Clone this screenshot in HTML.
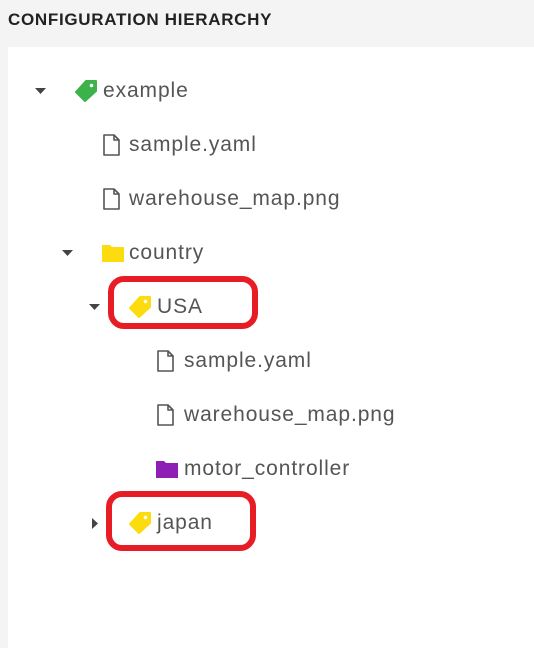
<!DOCTYPE html>
<html><head><meta charset="utf-8"><style>
*{margin:0;padding:0;box-sizing:border-box}
body{width:534px;height:648px;background:#f4f4f4;font-family:"Liberation Sans",sans-serif;position:relative;overflow:hidden}
.hdr{position:absolute;left:8px;top:10px;font-weight:bold;font-size:17px;color:#222;letter-spacing:0.7px}
.panel{position:absolute;left:8px;top:47px;right:0;bottom:0;background:#fff}
.row{position:absolute;height:30px;display:flex;align-items:center;font-size:21px;letter-spacing:0.9px;color:#555}
.arrow{position:absolute}
.box{position:absolute;border:6px solid #e81c24;border-radius:16px}
</style></head><body>
<div class="hdr">CONFIGURATION HIERARCHY</div>
<div class="panel"></div>

<svg class="arrow" style="left:35px;top:88px" width="11" height="7"><path d="M0 0H11L5.5 6Z" fill="#444"/></svg>
<svg class="arrow" style="left:62px;top:250px" width="11" height="7"><path d="M0 0H11L5.5 6Z" fill="#444"/></svg>
<svg class="arrow" style="left:89px;top:304px" width="11" height="7"><path d="M0 0H11L5.5 6Z" fill="#444"/></svg>
<svg class="arrow" style="left:92px;top:518px" width="7" height="11"><path d="M0 0V11L6 5.5Z" fill="#444"/></svg>

<svg style="position:absolute;left:74px;top:80px" width="24" height="22" viewBox="0 0 24 22"><path d="M12 1H22V11L11 21L2 12Z" fill="#3cb34a" stroke="#3cb34a" stroke-linejoin="round" stroke-width="2"/><circle cx="17.5" cy="5.5" r="1.8" fill="#fff"/></svg>
<div class="row" style="left:103px;top:76px">example</div>

<svg style="position:absolute;left:103px;top:134px" width="17" height="22" viewBox="0 0 17 22"><path d="M1 1H11L16 6V21H1Z M11 1V6H16" fill="none" stroke="#555" stroke-width="1.6" stroke-linejoin="round"/></svg>
<div class="row" style="left:129px;top:130px">sample.yaml</div>

<svg style="position:absolute;left:103px;top:188px" width="17" height="22" viewBox="0 0 17 22"><path d="M1 1H11L16 6V21H1Z M11 1V6H16" fill="none" stroke="#555" stroke-width="1.6" stroke-linejoin="round"/></svg>
<div class="row" style="left:129px;top:184px">warehouse_map.png</div>

<svg style="position:absolute;left:102px;top:244px" width="22" height="18" viewBox="0 0 22 18"><path d="M0 1H8L10 3H22V18H0Z" fill="#fddc0f"/></svg>
<div class="row" style="left:129px;top:238px">country</div>

<svg style="position:absolute;left:128px;top:296px" width="24" height="22" viewBox="0 0 24 22"><path d="M12 1H22V11L11 21L2 12Z" fill="#fddc0f" stroke="#fddc0f" stroke-linejoin="round" stroke-width="2"/><circle cx="17.5" cy="5.5" r="1.8" fill="#fff"/></svg>
<div class="row" style="left:157px;top:292px">USA</div>

<svg style="position:absolute;left:157px;top:350px" width="17" height="22" viewBox="0 0 17 22"><path d="M1 1H11L16 6V21H1Z M11 1V6H16" fill="none" stroke="#555" stroke-width="1.6" stroke-linejoin="round"/></svg>
<div class="row" style="left:184px;top:346px">sample.yaml</div>

<svg style="position:absolute;left:157px;top:404px" width="17" height="22" viewBox="0 0 17 22"><path d="M1 1H11L16 6V21H1Z M11 1V6H16" fill="none" stroke="#555" stroke-width="1.6" stroke-linejoin="round"/></svg>
<div class="row" style="left:184px;top:400px">warehouse_map.png</div>

<svg style="position:absolute;left:156px;top:460px" width="22" height="18" viewBox="0 0 22 18"><path d="M0 1H8L10 3H22V18H0Z" fill="#8e1fb5"/></svg>
<div class="row" style="left:184px;top:454px">motor_controller</div>

<svg style="position:absolute;left:128px;top:512px" width="24" height="22" viewBox="0 0 24 22"><path d="M12 1H22V11L11 21L2 12Z" fill="#fddc0f" stroke="#fddc0f" stroke-linejoin="round" stroke-width="2"/><circle cx="17.5" cy="5.5" r="1.8" fill="#fff"/></svg>
<div class="row" style="left:157px;top:508px">japan</div>

<div class="box" style="left:108px;top:276px;width:150px;height:53px"></div>
<div class="box" style="left:106px;top:491px;width:150px;height:60px"></div>
</body></html>
